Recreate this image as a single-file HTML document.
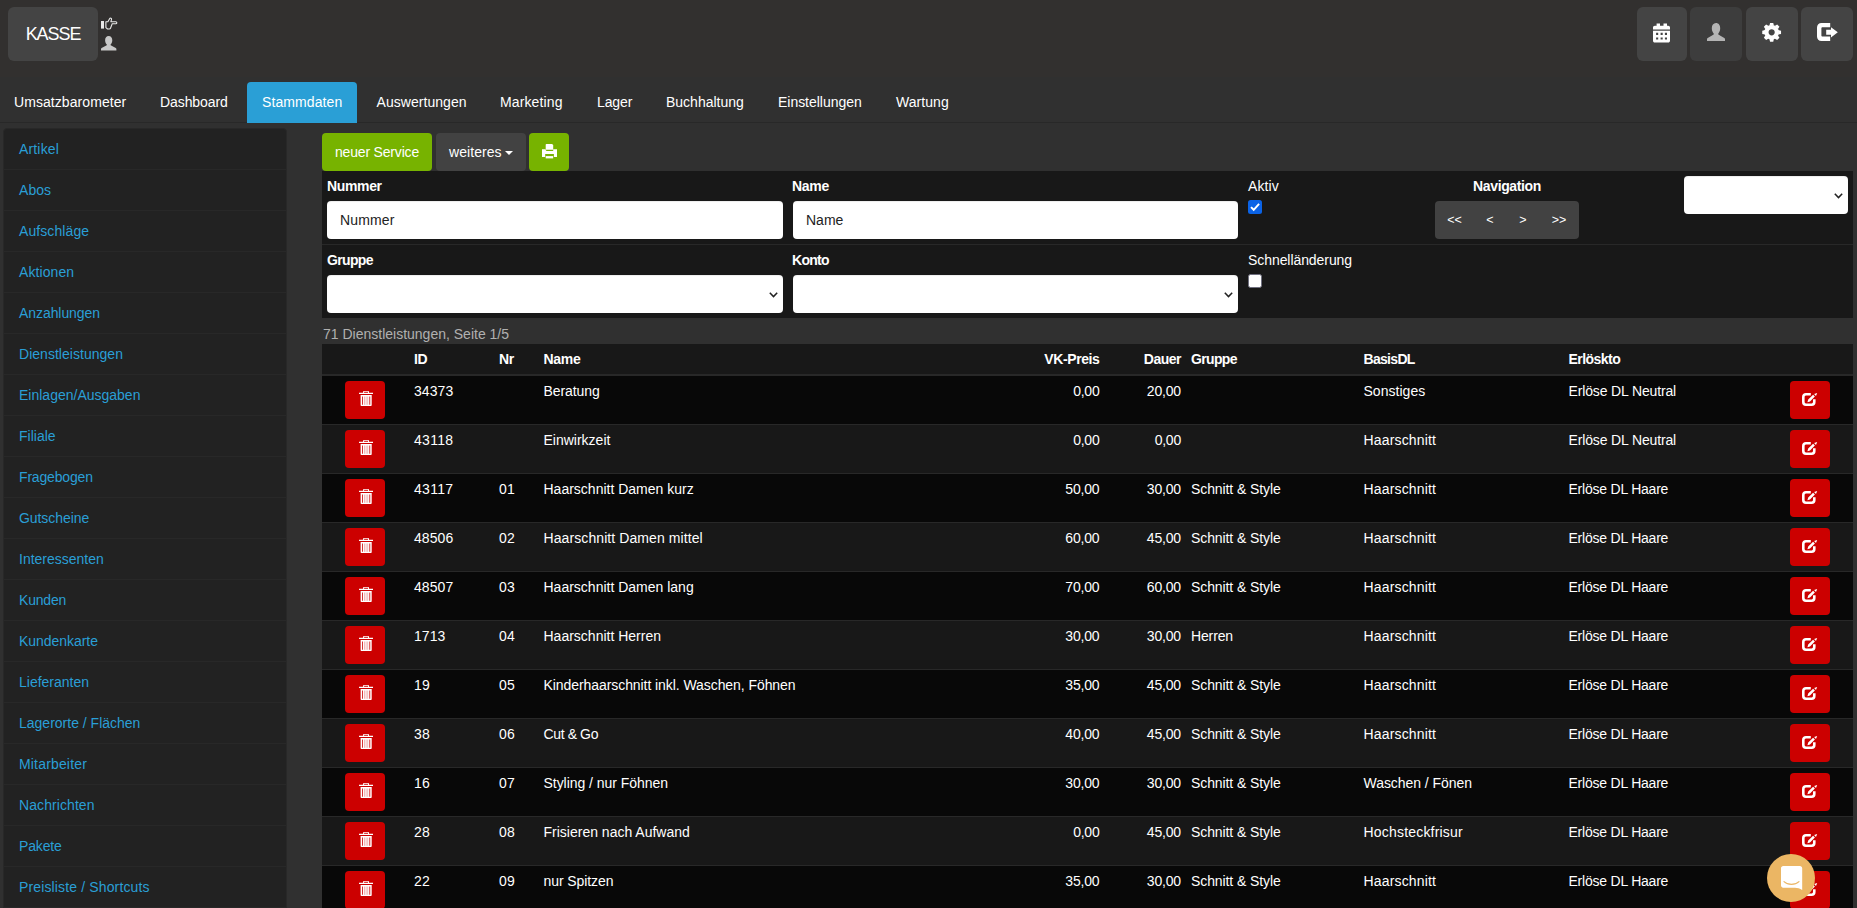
<!DOCTYPE html><html lang="de"><head><meta charset="utf-8"><title>Stammdaten - Dienstleistungen</title><style>
*{box-sizing:border-box;margin:0;padding:0}
html,body{width:1857px;height:908px;overflow:hidden;background:#303030}
body{font-family:"Liberation Sans",sans-serif;font-size:14px;line-height:20px;color:#fff;position:relative}
#app{position:absolute;left:0;top:0;width:1857px;height:908px;overflow:hidden;background:#303030}
.a{position:absolute;white-space:nowrap}
.ic{position:absolute;display:block;overflow:visible}
.hdr{left:0;top:0;width:1857px;height:77px;background:#32302f}
.hb{top:7px;height:54px;background:#444;border-radius:6px}
.kasse{left:8px;width:90px;font-size:18px;line-height:54px;text-align:center;color:#fff}
.nav{left:0;top:77px;width:1857px;height:46px;border-bottom:1px solid #282828;background:#303030}
.tab{top:92px;height:20px;color:#fff}
.tabact{left:247px;top:82px;width:110px;height:41px;background:#2a9fd6;border-radius:4px 4px 0 0}
.side{left:3px;top:128px;width:284px;height:790px;background:#222;border:1px solid #282828;border-radius:4px 4px 0 0}
.sl{left:0;width:282px;height:1px;background:#282828}
.si{left:15px;height:20px;color:#2a9fd6}
.btn{border-radius:4px;height:38px;top:133px;text-align:center;line-height:38px;color:#fff}
.g{background:#77b300}.d{background:#424242}.r{background:#cc0000}
.fp{left:322px;top:171px;width:1531px;height:147px;background:#181818}
.fl{height:20px;color:#fff}
.b{font-weight:700}
.inp{box-shadow:inset 0 1px 1px rgba(0,0,0,.075);background:#fff;border-radius:4px;height:38px;color:#222;line-height:38px;padding-left:13px}
.sep{left:322px;top:244px;width:1531px;height:1px;background:#282828}
.cb{width:14px;height:14px;border-radius:2.5px}
.th{left:322px;top:344px;width:1531px;height:32px;background:#181818;border-bottom:2px solid #282828}
.tr{left:322px;width:1531px;height:49px;border-bottom:1px solid #282828}
.e{background:#080808}.o{background:#181818}
.c{height:20px;color:#fff}
.rt{text-align:right}
.rb{width:40px;height:38px;border-radius:4px;background:#cc0000}
</style></head><body><div id="app">
<div class="a hdr"></div>
<div class="a hb kasse"><span style="letter-spacing:-1.07px">KASSE</span></div>
<svg class="ic" style="left:100.9px;top:16.7px;color:#e8e8e8" width="16.4" height="12.5" viewBox="0 0 16.4 12.5" preserveAspectRatio="none" fill="#e8e8e8"><rect x="0" y="4" width="3" height="7.6"/><path d="M4.900 4.800h2l2-3.600c1.200-.3 1.900.5 1.600 1.500L9.900 4.700h4.900c1.400 0 1.400 2.100 0 2.100H11.200l-1.700 4.400c-.2.500-.6.800-1.200.800H6.600L4.900 10.600z" fill="none" stroke="currentColor" stroke-width="1.100" stroke-linejoin="round"/></svg>
<svg class="ic" style="left:101px;top:35.7px;color:#c8c8c8" width="15.4" height="14.4" viewBox="0 0 18 18" preserveAspectRatio="none" fill="#c8c8c8"><path d="M9 0C11.600 0 13.200 2.200 13.200 5.200 13.200 7.600 12.300 9.400 11.300 10.400V11.600L17.300 15C17.800 15.300 18 15.800 18 16.300V18H0V16.300C0 15.800.2 15.300.7 15L6.700 11.600V10.400C5.700 9.400 4.800 7.600 4.800 5.200 4.800 2.200 6.400 0 9 0Z"/></svg>
<div class="a hb" style="left:1637px;width:50px;background:#444"></div>
<div class="a hb" style="left:1690px;width:52px;background:#3d3d3d"></div>
<div class="a hb" style="left:1746px;width:52px;background:#444"></div>
<div class="a hb" style="left:1801px;width:52px;background:#444"></div>
<svg class="ic" style="left:1653px;top:23.3px;color:#fff" width="17" height="19.5" viewBox="0 0 17 19.5" preserveAspectRatio="none" fill="#fff"><path d="M3.600 .5H7v2.300h3.500V.5h3.500v2.300h1.200c1 0 1.800.8 1.800 1.800v2H0v-2c0-1 .8-1.800 1.800-1.800h1.800z"/><path d="M0 7.700h17v10c0 1-.8 1.800-1.800 1.800H1.800c-1 0-1.800-.8-1.800-1.800z M3.100 9.800v2.100h2.100V9.800z M7.600 9.800v2.100h2.100V9.800z M11.900 9.800v2.100H14V9.800z M3.100 14.500v2.100h2.100v-2.100z M7.600 14.500v2.100h2.100v-2.100z M11.900 14.500v2.100H14v-2.100z" fill-rule="evenodd"/></svg>
<svg class="ic" style="left:1707px;top:23px;color:#b4b4b4" width="18" height="18" viewBox="0 0 18 18" preserveAspectRatio="none" fill="#b4b4b4"><path d="M9 0C11.600 0 13.200 2.200 13.200 5.200 13.200 7.600 12.300 9.400 11.300 10.400V11.600L17.300 15C17.800 15.300 18 15.800 18 16.300V18H0V16.300C0 15.800.2 15.300.7 15L6.700 11.600V10.400C5.700 9.400 4.800 7.600 4.800 5.200 4.800 2.200 6.400 0 9 0Z"/></svg>
<svg class="ic" style="left:1761.9px;top:22.7px;color:#fff" width="19.3" height="18.6" viewBox="-9.65 -9.3 19.3 18.6" preserveAspectRatio="none" fill="#fff"><g><circle r="5.2" fill="none" stroke="currentColor" stroke-width="4.200"/><path d="M-2.300 -6.500 L-1.600 -9.400 H1.600 L2.300 -6.500Z" transform="rotate(0)"/><path d="M-2.300 -6.500 L-1.600 -9.400 H1.600 L2.300 -6.500Z" transform="rotate(45)"/><path d="M-2.300 -6.500 L-1.600 -9.400 H1.600 L2.300 -6.500Z" transform="rotate(90)"/><path d="M-2.300 -6.500 L-1.600 -9.400 H1.600 L2.300 -6.500Z" transform="rotate(135)"/><path d="M-2.300 -6.500 L-1.600 -9.400 H1.600 L2.300 -6.500Z" transform="rotate(180)"/><path d="M-2.300 -6.500 L-1.600 -9.400 H1.600 L2.300 -6.500Z" transform="rotate(225)"/><path d="M-2.300 -6.500 L-1.600 -9.400 H1.600 L2.300 -6.500Z" transform="rotate(270)"/><path d="M-2.300 -6.500 L-1.600 -9.400 H1.600 L2.300 -6.500Z" transform="rotate(315)"/></g></svg>
<svg class="ic" style="left:1817.4px;top:23.4px;color:#fff" width="20.8" height="17.9" viewBox="0 0 20.800 18" preserveAspectRatio="none" fill="#fff"><path d="M13.200 0H4.500C1.800 0 0 1.800 0 4.500V13.500C0 16.200 1.800 18 4.500 18H13.200V13.700H5.500C4.800 13.700 4.400 13.300 4.400 12.600V5.400C4.400 4.700 4.800 4.300 5.500 4.300H13.200Z"/><path d="M9.200 6.900H14V4.200L20.800 9.300 14 14.600V11.700H9.200Z"/></svg>
<div class="a nav"></div><div class="a tabact"></div>
<div class="a tab" style="left:14px"><span style="letter-spacing:0.07px">Umsatzbarometer</span></div>
<div class="a tab" style="left:160px"><span style="letter-spacing:-0.09px">Dashboard</span></div>
<div class="a tab" style="left:262px"><span style="letter-spacing:0.09px">Stammdaten</span></div>
<div class="a tab" style="left:376.5px"><span style="letter-spacing:0.05px">Auswertungen</span></div>
<div class="a tab" style="left:500px"><span style="letter-spacing:0.12px">Marketing</span></div>
<div class="a tab" style="left:597px"><span style="letter-spacing:-0.12px">Lager</span></div>
<div class="a tab" style="left:666px">Buchhaltung</div>
<div class="a tab" style="left:778px"><span style="letter-spacing:-0.03px">Einstellungen</span></div>
<div class="a tab" style="left:896px"><span style="letter-spacing:0.06px">Wartung</span></div>
<div class="a side">
<div class="a si" style="top:10px"><span style="letter-spacing:0.16px">Artikel</span></div>
<div class="a sl" style="top:40px"></div>
<div class="a si" style="top:51px"><span style="letter-spacing:0.07px">Abos</span></div>
<div class="a sl" style="top:81px"></div>
<div class="a si" style="top:92px"><span style="letter-spacing:0.09px">Aufschläge</span></div>
<div class="a sl" style="top:122px"></div>
<div class="a si" style="top:133px"><span style="letter-spacing:0.08px">Aktionen</span></div>
<div class="a sl" style="top:163px"></div>
<div class="a si" style="top:174px"><span style="letter-spacing:-0.07px">Anzahlungen</span></div>
<div class="a sl" style="top:204px"></div>
<div class="a si" style="top:215px"><span style="letter-spacing:0.03px">Dienstleistungen</span></div>
<div class="a sl" style="top:245px"></div>
<div class="a si" style="top:256px">Einlagen/Ausgaben</div>
<div class="a sl" style="top:286px"></div>
<div class="a si" style="top:297px">Filiale</div>
<div class="a sl" style="top:327px"></div>
<div class="a si" style="top:338px"><span style="letter-spacing:-0.17px">Fragebogen</span></div>
<div class="a sl" style="top:368px"></div>
<div class="a si" style="top:379px"><span style="letter-spacing:-0.07px">Gutscheine</span></div>
<div class="a sl" style="top:409px"></div>
<div class="a si" style="top:420px">Interessenten</div>
<div class="a sl" style="top:450px"></div>
<div class="a si" style="top:461px"><span style="letter-spacing:-0.19px">Kunden</span></div>
<div class="a sl" style="top:491px"></div>
<div class="a si" style="top:502px"><span style="letter-spacing:-0.04px">Kundenkarte</span></div>
<div class="a sl" style="top:532px"></div>
<div class="a si" style="top:543px">Lieferanten</div>
<div class="a sl" style="top:573px"></div>
<div class="a si" style="top:584px">Lagerorte / Flächen</div>
<div class="a sl" style="top:614px"></div>
<div class="a si" style="top:625px"><span style="letter-spacing:0.17px">Mitarbeiter</span></div>
<div class="a sl" style="top:655px"></div>
<div class="a si" style="top:666px"><span style="letter-spacing:0.08px">Nachrichten</span></div>
<div class="a sl" style="top:696px"></div>
<div class="a si" style="top:707px"><span style="letter-spacing:-0.14px">Pakete</span></div>
<div class="a sl" style="top:737px"></div>
<div class="a si" style="top:748px"><span style="letter-spacing:0.14px">Preisliste / Shortcuts</span></div>
<div class="a sl" style="top:778px"></div>
</div>
<div class="a btn g" style="left:322px;width:110px"><span style="letter-spacing:-0.18px">neuer Service</span></div>
<div class="a btn d" style="left:436px;width:90px;text-align:left;padding-left:13px"><span style="letter-spacing:0.06px">weiteres</span></div>
<div class="a" style="left:505px;top:151px;width:0;height:0;border-left:4px solid transparent;border-right:4px solid transparent;border-top:4px solid #fff"></div>
<div class="a btn g" style="left:529px;width:40px"></div>
<svg class="ic" style="left:541.8px;top:143.9px;color:#fff" width="15" height="14.4" viewBox="0 0 15 14.400" preserveAspectRatio="none" fill="#fff"><path d="M4.300 0h5.800l1.100 1.100V5.800H3.700V.6z"/><path d="M0 5.200h3.700v1h7.500v-1H15v7.900h-3.100V9.900H3.200v3.200H0z M4.200 6.900h7v-.7h-7z" fill-rule="evenodd"/><rect x="3.700" y="12.100" width="7.500" height="2.300"/></svg>
<div class="a fp"></div><div class="a sep"></div>
<div class="a fl b" style="left:327px;top:176px"><span style="letter-spacing:-0.35px">Nummer</span></div>
<div class="a inp" style="left:327px;top:201px;width:456px"><span style="letter-spacing:0.13px">Nummer</span></div>
<div class="a fl b" style="left:792px;top:176px"><span style="letter-spacing:-0.27px">Name</span></div>
<div class="a inp" style="left:793px;top:201px;width:445px">Name</div>
<div class="a fl" style="left:1248px;top:176px"><span style="letter-spacing:0.13px">Aktiv</span></div>
<div class="a cb" style="left:1248px;top:200px;background:#0b63e6"></div>
<svg class="ic" style="left:1248px;top:200px" width="14" height="14" viewBox="0 0 13 13"><path d="M2.8 6.6 5.3 9.1 10.3 3.6" fill="none" stroke="#fff" stroke-width="1.8"/></svg>
<div class="a fl b" style="left:1435px;width:144px;text-align:center;top:176px"><span style="letter-spacing:-0.38px">Navigation</span></div>
<div class="a btn d" style="left:1435px;top:201px;width:144px"></div>
<div class="a fl" style="left:1434.5px;width:40px;text-align:center;top:210px;font-size:12.5px">&lt;&lt;</div>
<div class="a fl" style="left:1470px;width:40px;text-align:center;top:210px;font-size:12.5px">&lt;</div>
<div class="a fl" style="left:1503px;width:40px;text-align:center;top:210px;font-size:12.5px">&gt;</div>
<div class="a fl" style="left:1539px;width:40px;text-align:center;top:210px;font-size:12.5px">&gt;&gt;</div>
<div class="a inp" style="left:1684px;top:176px;width:164px"></div>
<div class="a fl b" style="left:327px;top:250px"><span style="letter-spacing:-0.66px">Gruppe</span></div>
<div class="a inp" style="left:327px;top:275px;width:456px"></div>
<div class="a fl b" style="left:792px;top:250px"><span style="letter-spacing:-0.7px">Konto</span></div>
<div class="a inp" style="left:793px;top:275px;width:445px"></div>
<div class="a fl" style="left:1248px;top:250px"><span style="letter-spacing:-0.07px">Schnelländerung</span></div>
<div class="a cb" style="left:1248px;top:274px;background:#fff;border:1px solid #6f6f7f"></div>
<svg class="ic" style="left:768.5px;top:292px" width="9" height="6" viewBox="0 0 9 6"><path d="M0.8 0.8 4.5 4.6 8.2 0.8" fill="none" stroke="#222" stroke-width="1.5"/></svg>
<svg class="ic" style="left:1223.5px;top:292px" width="9" height="6" viewBox="0 0 9 6"><path d="M0.8 0.8 4.5 4.6 8.2 0.8" fill="none" stroke="#222" stroke-width="1.5"/></svg>
<svg class="ic" style="left:1833.8px;top:192.5px" width="9" height="6" viewBox="0 0 9 6"><path d="M0.8 0.8 4.5 4.6 8.2 0.8" fill="none" stroke="#222" stroke-width="1.5"/></svg>
<div class="a" style="left:323px;top:324px;height:20px;color:#b0b0b0">71 Dienstleistungen, Seite 1/5</div>
<div class="a th"></div>
<div class="a c b" style="left:414px;top:349px"><span style="letter-spacing:-0.4px">ID</span></div>
<div class="a c b" style="left:499px;top:349px"><span style="letter-spacing:-0.27px">Nr</span></div>
<div class="a c b" style="left:543.5px;top:349px"><span style="letter-spacing:-0.27px">Name</span></div>
<div class="a c b rt" style="left:999.5px;width:100px;top:349px"><span style="letter-spacing:-0.4px">VK-Preis</span></div>
<div class="a c b rt" style="left:1081px;width:100px;top:349px"><span style="letter-spacing:-0.51px">Dauer</span></div>
<div class="a c b" style="left:1191px;top:349px"><span style="letter-spacing:-0.66px">Gruppe</span></div>
<div class="a c b" style="left:1363.5px;top:349px"><span style="letter-spacing:-0.69px">BasisDL</span></div>
<div class="a c b" style="left:1568.5px;top:349px"><span style="letter-spacing:-0.53px">Erlöskto</span></div>
<div class="a tr e" style="top:376px"></div>
<div class="a rb" style="left:345px;top:381px"></div>
<svg class="ic" style="left:359px;top:391px;color:#fff" width="14" height="15" viewBox="0 0 14 15" preserveAspectRatio="none" fill="#fff"><path d="M5.100 0h3.900c.6 0 1 .4 1 1v.7h4v1.400H0V1.700h4.100V1c0-.6.400-1 1-1z M5.100.8v.9h3.900V.8z" fill-rule="evenodd"/><path d="M1.600 4.100h11.100v9.900c0 .6-.4 1-1 1H2.600c-.6 0-1-.4-1-1z M3.200 5.500v8.300h.8V5.500z M10.400 5.500v8.300h.8V5.500z" fill-rule="evenodd"/><path d="M5.500 5.500v8.300M7.100 5.500v8.300M8.700 5.500v8.300" stroke="#cc0000" stroke-opacity=".4" stroke-width=".7"/></svg>
<div class="a rb" style="left:1790px;top:381px"></div>
<svg class="ic" style="left:1802.4px;top:393px;color:#fff" width="15.2" height="13" viewBox="0 0 15.200 13" preserveAspectRatio="none" fill="#fff"><path d="M8.800 1.300H4C2.300 1.300 1.300 2.300 1.300 4V9C1.300 10.700 2.300 11.700 4 11.700H9.600C11.300 11.700 12.300 10.700 12.300 9V6.300" fill="none" stroke="currentColor" stroke-width="2.600"/><path d="M5.400 9.300 6.200 6.600 11.100 1.800 12.900 3.600 8 8.400z M12.100 1 15.200 0 14 3z"/></svg>
<div class="a c" style="left:414px;top:381px"><span style="letter-spacing:0.08px">34373</span></div>
<div class="a c" style="left:543.5px;top:381px"><span style="letter-spacing:-0.09px">Beratung</span></div>
<div class="a c rt" style="left:999.5px;width:100px;top:381px"><span style="letter-spacing:-0.22px">0,00</span></div>
<div class="a c rt" style="left:1081px;width:100px;top:381px"><span style="letter-spacing:-0.16px">20,00</span></div>
<div class="a c" style="left:1363.5px;top:381px"><span style="letter-spacing:0.03px">Sonstiges</span></div>
<div class="a c" style="left:1568.5px;top:381px"><span style="letter-spacing:-0.14px">Erlöse DL Neutral</span></div>
<div class="a tr o" style="top:425px"></div>
<div class="a rb" style="left:345px;top:430px"></div>
<svg class="ic" style="left:359px;top:440px;color:#fff" width="14" height="15" viewBox="0 0 14 15" preserveAspectRatio="none" fill="#fff"><path d="M5.100 0h3.900c.6 0 1 .4 1 1v.7h4v1.400H0V1.700h4.100V1c0-.6.400-1 1-1z M5.100.8v.9h3.900V.8z" fill-rule="evenodd"/><path d="M1.600 4.100h11.100v9.900c0 .6-.4 1-1 1H2.600c-.6 0-1-.4-1-1z M3.200 5.500v8.300h.8V5.500z M10.400 5.500v8.300h.8V5.500z" fill-rule="evenodd"/><path d="M5.500 5.500v8.300M7.100 5.500v8.300M8.700 5.500v8.300" stroke="#cc0000" stroke-opacity=".4" stroke-width=".7"/></svg>
<div class="a rb" style="left:1790px;top:430px"></div>
<svg class="ic" style="left:1802.4px;top:442px;color:#fff" width="15.2" height="13" viewBox="0 0 15.200 13" preserveAspectRatio="none" fill="#fff"><path d="M8.800 1.300H4C2.300 1.300 1.300 2.300 1.300 4V9C1.300 10.700 2.300 11.700 4 11.700H9.600C11.300 11.700 12.300 10.700 12.300 9V6.300" fill="none" stroke="currentColor" stroke-width="2.600"/><path d="M5.400 9.300 6.200 6.600 11.100 1.800 12.900 3.600 8 8.400z M12.100 1 15.200 0 14 3z"/></svg>
<div class="a c" style="left:414px;top:430px"><span style="letter-spacing:0.29px">43118</span></div>
<div class="a c" style="left:543.5px;top:430px">Einwirkzeit</div>
<div class="a c rt" style="left:999.5px;width:100px;top:430px"><span style="letter-spacing:-0.22px">0,00</span></div>
<div class="a c rt" style="left:1081px;width:100px;top:430px"><span style="letter-spacing:-0.22px">0,00</span></div>
<div class="a c" style="left:1363.5px;top:430px"><span style="letter-spacing:0.16px">Haarschnitt</span></div>
<div class="a c" style="left:1568.5px;top:430px"><span style="letter-spacing:-0.14px">Erlöse DL Neutral</span></div>
<div class="a tr e" style="top:474px"></div>
<div class="a rb" style="left:345px;top:479px"></div>
<svg class="ic" style="left:359px;top:489px;color:#fff" width="14" height="15" viewBox="0 0 14 15" preserveAspectRatio="none" fill="#fff"><path d="M5.100 0h3.900c.6 0 1 .4 1 1v.7h4v1.400H0V1.700h4.100V1c0-.6.400-1 1-1z M5.100.8v.9h3.900V.8z" fill-rule="evenodd"/><path d="M1.600 4.100h11.100v9.900c0 .6-.4 1-1 1H2.600c-.6 0-1-.4-1-1z M3.200 5.500v8.300h.8V5.500z M10.400 5.500v8.300h.8V5.500z" fill-rule="evenodd"/><path d="M5.500 5.500v8.300M7.100 5.500v8.300M8.700 5.500v8.300" stroke="#cc0000" stroke-opacity=".4" stroke-width=".7"/></svg>
<div class="a rb" style="left:1790px;top:479px"></div>
<svg class="ic" style="left:1802.4px;top:491px;color:#fff" width="15.2" height="13" viewBox="0 0 15.200 13" preserveAspectRatio="none" fill="#fff"><path d="M8.800 1.300H4C2.300 1.300 1.300 2.300 1.300 4V9C1.300 10.700 2.300 11.700 4 11.700H9.600C11.300 11.700 12.300 10.700 12.300 9V6.300" fill="none" stroke="currentColor" stroke-width="2.600"/><path d="M5.400 9.300 6.200 6.600 11.100 1.800 12.900 3.600 8 8.400z M12.100 1 15.200 0 14 3z"/></svg>
<div class="a c" style="left:414px;top:479px"><span style="letter-spacing:0.29px">43117</span></div>
<div class="a c" style="left:499px;top:479px"><span style="letter-spacing:0.09px">01</span></div>
<div class="a c" style="left:543.5px;top:479px">Haarschnitt Damen kurz</div>
<div class="a c rt" style="left:999.5px;width:100px;top:479px"><span style="letter-spacing:-0.16px">50,00</span></div>
<div class="a c rt" style="left:1081px;width:100px;top:479px"><span style="letter-spacing:-0.16px">30,00</span></div>
<div class="a c" style="left:1191px;top:479px"><span style="letter-spacing:-0.09px">Schnitt &amp; Style</span></div>
<div class="a c" style="left:1363.5px;top:479px"><span style="letter-spacing:0.16px">Haarschnitt</span></div>
<div class="a c" style="left:1568.5px;top:479px"><span style="letter-spacing:-0.22px">Erlöse DL Haare</span></div>
<div class="a tr o" style="top:523px"></div>
<div class="a rb" style="left:345px;top:528px"></div>
<svg class="ic" style="left:359px;top:538px;color:#fff" width="14" height="15" viewBox="0 0 14 15" preserveAspectRatio="none" fill="#fff"><path d="M5.100 0h3.900c.6 0 1 .4 1 1v.7h4v1.400H0V1.700h4.100V1c0-.6.400-1 1-1z M5.100.8v.9h3.900V.8z" fill-rule="evenodd"/><path d="M1.600 4.100h11.100v9.900c0 .6-.4 1-1 1H2.600c-.6 0-1-.4-1-1z M3.200 5.500v8.300h.8V5.500z M10.400 5.500v8.300h.8V5.500z" fill-rule="evenodd"/><path d="M5.500 5.500v8.300M7.100 5.500v8.300M8.700 5.500v8.300" stroke="#cc0000" stroke-opacity=".4" stroke-width=".7"/></svg>
<div class="a rb" style="left:1790px;top:528px"></div>
<svg class="ic" style="left:1802.4px;top:540px;color:#fff" width="15.2" height="13" viewBox="0 0 15.200 13" preserveAspectRatio="none" fill="#fff"><path d="M8.800 1.300H4C2.300 1.300 1.300 2.300 1.300 4V9C1.300 10.700 2.300 11.700 4 11.700H9.600C11.300 11.700 12.300 10.700 12.300 9V6.300" fill="none" stroke="currentColor" stroke-width="2.600"/><path d="M5.400 9.300 6.200 6.600 11.100 1.800 12.900 3.600 8 8.400z M12.100 1 15.200 0 14 3z"/></svg>
<div class="a c" style="left:414px;top:528px"><span style="letter-spacing:0.08px">48506</span></div>
<div class="a c" style="left:499px;top:528px"><span style="letter-spacing:0.09px">02</span></div>
<div class="a c" style="left:543.5px;top:528px"><span style="letter-spacing:0.09px">Haarschnitt Damen mittel</span></div>
<div class="a c rt" style="left:999.5px;width:100px;top:528px"><span style="letter-spacing:-0.16px">60,00</span></div>
<div class="a c rt" style="left:1081px;width:100px;top:528px"><span style="letter-spacing:-0.16px">45,00</span></div>
<div class="a c" style="left:1191px;top:528px"><span style="letter-spacing:-0.09px">Schnitt &amp; Style</span></div>
<div class="a c" style="left:1363.5px;top:528px"><span style="letter-spacing:0.16px">Haarschnitt</span></div>
<div class="a c" style="left:1568.5px;top:528px"><span style="letter-spacing:-0.22px">Erlöse DL Haare</span></div>
<div class="a tr e" style="top:572px"></div>
<div class="a rb" style="left:345px;top:577px"></div>
<svg class="ic" style="left:359px;top:587px;color:#fff" width="14" height="15" viewBox="0 0 14 15" preserveAspectRatio="none" fill="#fff"><path d="M5.100 0h3.900c.6 0 1 .4 1 1v.7h4v1.400H0V1.700h4.100V1c0-.6.400-1 1-1z M5.100.8v.9h3.900V.8z" fill-rule="evenodd"/><path d="M1.600 4.100h11.100v9.900c0 .6-.4 1-1 1H2.600c-.6 0-1-.4-1-1z M3.200 5.500v8.300h.8V5.500z M10.400 5.500v8.300h.8V5.500z" fill-rule="evenodd"/><path d="M5.500 5.500v8.300M7.100 5.500v8.300M8.700 5.500v8.300" stroke="#cc0000" stroke-opacity=".4" stroke-width=".7"/></svg>
<div class="a rb" style="left:1790px;top:577px"></div>
<svg class="ic" style="left:1802.4px;top:589px;color:#fff" width="15.2" height="13" viewBox="0 0 15.200 13" preserveAspectRatio="none" fill="#fff"><path d="M8.800 1.300H4C2.300 1.300 1.300 2.300 1.300 4V9C1.300 10.700 2.300 11.700 4 11.700H9.600C11.300 11.700 12.300 10.700 12.300 9V6.300" fill="none" stroke="currentColor" stroke-width="2.600"/><path d="M5.400 9.300 6.200 6.600 11.100 1.800 12.900 3.600 8 8.400z M12.100 1 15.200 0 14 3z"/></svg>
<div class="a c" style="left:414px;top:577px"><span style="letter-spacing:0.08px">48507</span></div>
<div class="a c" style="left:499px;top:577px"><span style="letter-spacing:0.09px">03</span></div>
<div class="a c" style="left:543.5px;top:577px">Haarschnitt Damen lang</div>
<div class="a c rt" style="left:999.5px;width:100px;top:577px"><span style="letter-spacing:-0.16px">70,00</span></div>
<div class="a c rt" style="left:1081px;width:100px;top:577px"><span style="letter-spacing:-0.16px">60,00</span></div>
<div class="a c" style="left:1191px;top:577px"><span style="letter-spacing:-0.09px">Schnitt &amp; Style</span></div>
<div class="a c" style="left:1363.5px;top:577px"><span style="letter-spacing:0.16px">Haarschnitt</span></div>
<div class="a c" style="left:1568.5px;top:577px"><span style="letter-spacing:-0.22px">Erlöse DL Haare</span></div>
<div class="a tr o" style="top:621px"></div>
<div class="a rb" style="left:345px;top:626px"></div>
<svg class="ic" style="left:359px;top:636px;color:#fff" width="14" height="15" viewBox="0 0 14 15" preserveAspectRatio="none" fill="#fff"><path d="M5.100 0h3.900c.6 0 1 .4 1 1v.7h4v1.400H0V1.700h4.100V1c0-.6.400-1 1-1z M5.100.8v.9h3.900V.8z" fill-rule="evenodd"/><path d="M1.600 4.100h11.100v9.900c0 .6-.4 1-1 1H2.600c-.6 0-1-.4-1-1z M3.200 5.500v8.300h.8V5.500z M10.400 5.500v8.300h.8V5.500z" fill-rule="evenodd"/><path d="M5.500 5.500v8.300M7.100 5.500v8.300M8.700 5.500v8.300" stroke="#cc0000" stroke-opacity=".4" stroke-width=".7"/></svg>
<div class="a rb" style="left:1790px;top:626px"></div>
<svg class="ic" style="left:1802.4px;top:638px;color:#fff" width="15.2" height="13" viewBox="0 0 15.200 13" preserveAspectRatio="none" fill="#fff"><path d="M8.800 1.300H4C2.300 1.300 1.300 2.300 1.300 4V9C1.300 10.700 2.300 11.700 4 11.700H9.600C11.300 11.700 12.300 10.700 12.300 9V6.300" fill="none" stroke="currentColor" stroke-width="2.600"/><path d="M5.400 9.300 6.200 6.600 11.100 1.800 12.900 3.600 8 8.400z M12.100 1 15.200 0 14 3z"/></svg>
<div class="a c" style="left:414px;top:626px"><span style="letter-spacing:0.08px">1713</span></div>
<div class="a c" style="left:499px;top:626px"><span style="letter-spacing:0.09px">04</span></div>
<div class="a c" style="left:543.5px;top:626px">Haarschnitt Herren</div>
<div class="a c rt" style="left:999.5px;width:100px;top:626px"><span style="letter-spacing:-0.16px">30,00</span></div>
<div class="a c rt" style="left:1081px;width:100px;top:626px"><span style="letter-spacing:-0.16px">30,00</span></div>
<div class="a c" style="left:1191px;top:626px"><span style="letter-spacing:-0.14px">Herren</span></div>
<div class="a c" style="left:1363.5px;top:626px"><span style="letter-spacing:0.16px">Haarschnitt</span></div>
<div class="a c" style="left:1568.5px;top:626px"><span style="letter-spacing:-0.22px">Erlöse DL Haare</span></div>
<div class="a tr e" style="top:670px"></div>
<div class="a rb" style="left:345px;top:675px"></div>
<svg class="ic" style="left:359px;top:685px;color:#fff" width="14" height="15" viewBox="0 0 14 15" preserveAspectRatio="none" fill="#fff"><path d="M5.100 0h3.900c.6 0 1 .4 1 1v.7h4v1.400H0V1.700h4.100V1c0-.6.400-1 1-1z M5.100.8v.9h3.900V.8z" fill-rule="evenodd"/><path d="M1.600 4.100h11.100v9.900c0 .6-.4 1-1 1H2.600c-.6 0-1-.4-1-1z M3.200 5.500v8.300h.8V5.500z M10.400 5.500v8.300h.8V5.500z" fill-rule="evenodd"/><path d="M5.500 5.500v8.300M7.100 5.500v8.300M8.700 5.500v8.300" stroke="#cc0000" stroke-opacity=".4" stroke-width=".7"/></svg>
<div class="a rb" style="left:1790px;top:675px"></div>
<svg class="ic" style="left:1802.4px;top:687px;color:#fff" width="15.2" height="13" viewBox="0 0 15.200 13" preserveAspectRatio="none" fill="#fff"><path d="M8.800 1.300H4C2.300 1.300 1.300 2.300 1.300 4V9C1.300 10.700 2.300 11.700 4 11.700H9.600C11.300 11.700 12.300 10.700 12.300 9V6.300" fill="none" stroke="currentColor" stroke-width="2.600"/><path d="M5.400 9.300 6.200 6.600 11.100 1.800 12.900 3.600 8 8.400z M12.100 1 15.200 0 14 3z"/></svg>
<div class="a c" style="left:414px;top:675px"><span style="letter-spacing:0.09px">19</span></div>
<div class="a c" style="left:499px;top:675px"><span style="letter-spacing:0.09px">05</span></div>
<div class="a c" style="left:543.5px;top:675px"><span style="letter-spacing:-0.07px">Kinderhaarschnitt inkl. Waschen, Föhnen</span></div>
<div class="a c rt" style="left:999.5px;width:100px;top:675px"><span style="letter-spacing:-0.16px">35,00</span></div>
<div class="a c rt" style="left:1081px;width:100px;top:675px"><span style="letter-spacing:-0.16px">45,00</span></div>
<div class="a c" style="left:1191px;top:675px"><span style="letter-spacing:-0.09px">Schnitt &amp; Style</span></div>
<div class="a c" style="left:1363.5px;top:675px"><span style="letter-spacing:0.16px">Haarschnitt</span></div>
<div class="a c" style="left:1568.5px;top:675px"><span style="letter-spacing:-0.22px">Erlöse DL Haare</span></div>
<div class="a tr o" style="top:719px"></div>
<div class="a rb" style="left:345px;top:724px"></div>
<svg class="ic" style="left:359px;top:734px;color:#fff" width="14" height="15" viewBox="0 0 14 15" preserveAspectRatio="none" fill="#fff"><path d="M5.100 0h3.900c.6 0 1 .4 1 1v.7h4v1.400H0V1.700h4.100V1c0-.6.400-1 1-1z M5.100.8v.9h3.900V.8z" fill-rule="evenodd"/><path d="M1.600 4.100h11.100v9.900c0 .6-.4 1-1 1H2.600c-.6 0-1-.4-1-1z M3.200 5.500v8.300h.8V5.500z M10.400 5.500v8.300h.8V5.500z" fill-rule="evenodd"/><path d="M5.500 5.500v8.300M7.100 5.500v8.300M8.700 5.500v8.300" stroke="#cc0000" stroke-opacity=".4" stroke-width=".7"/></svg>
<div class="a rb" style="left:1790px;top:724px"></div>
<svg class="ic" style="left:1802.4px;top:736px;color:#fff" width="15.2" height="13" viewBox="0 0 15.200 13" preserveAspectRatio="none" fill="#fff"><path d="M8.800 1.300H4C2.300 1.300 1.300 2.300 1.300 4V9C1.300 10.700 2.300 11.700 4 11.700H9.600C11.300 11.700 12.300 10.700 12.300 9V6.300" fill="none" stroke="currentColor" stroke-width="2.600"/><path d="M5.400 9.300 6.200 6.600 11.100 1.800 12.900 3.600 8 8.400z M12.100 1 15.200 0 14 3z"/></svg>
<div class="a c" style="left:414px;top:724px"><span style="letter-spacing:0.09px">38</span></div>
<div class="a c" style="left:499px;top:724px"><span style="letter-spacing:0.09px">06</span></div>
<div class="a c" style="left:543.5px;top:724px"><span style="letter-spacing:-0.38px">Cut &amp; Go</span></div>
<div class="a c rt" style="left:999.5px;width:100px;top:724px"><span style="letter-spacing:-0.16px">40,00</span></div>
<div class="a c rt" style="left:1081px;width:100px;top:724px"><span style="letter-spacing:-0.16px">45,00</span></div>
<div class="a c" style="left:1191px;top:724px"><span style="letter-spacing:-0.09px">Schnitt &amp; Style</span></div>
<div class="a c" style="left:1363.5px;top:724px"><span style="letter-spacing:0.16px">Haarschnitt</span></div>
<div class="a c" style="left:1568.5px;top:724px"><span style="letter-spacing:-0.22px">Erlöse DL Haare</span></div>
<div class="a tr e" style="top:768px"></div>
<div class="a rb" style="left:345px;top:773px"></div>
<svg class="ic" style="left:359px;top:783px;color:#fff" width="14" height="15" viewBox="0 0 14 15" preserveAspectRatio="none" fill="#fff"><path d="M5.100 0h3.900c.6 0 1 .4 1 1v.7h4v1.400H0V1.700h4.100V1c0-.6.400-1 1-1z M5.100.8v.9h3.900V.8z" fill-rule="evenodd"/><path d="M1.600 4.100h11.100v9.900c0 .6-.4 1-1 1H2.600c-.6 0-1-.4-1-1z M3.200 5.500v8.300h.8V5.500z M10.400 5.500v8.300h.8V5.500z" fill-rule="evenodd"/><path d="M5.500 5.500v8.300M7.100 5.500v8.300M8.700 5.500v8.300" stroke="#cc0000" stroke-opacity=".4" stroke-width=".7"/></svg>
<div class="a rb" style="left:1790px;top:773px"></div>
<svg class="ic" style="left:1802.4px;top:785px;color:#fff" width="15.2" height="13" viewBox="0 0 15.200 13" preserveAspectRatio="none" fill="#fff"><path d="M8.800 1.300H4C2.300 1.300 1.300 2.300 1.300 4V9C1.300 10.700 2.300 11.700 4 11.700H9.600C11.300 11.700 12.300 10.700 12.300 9V6.300" fill="none" stroke="currentColor" stroke-width="2.600"/><path d="M5.400 9.300 6.200 6.600 11.100 1.800 12.900 3.600 8 8.400z M12.100 1 15.200 0 14 3z"/></svg>
<div class="a c" style="left:414px;top:773px"><span style="letter-spacing:0.09px">16</span></div>
<div class="a c" style="left:499px;top:773px"><span style="letter-spacing:0.09px">07</span></div>
<div class="a c" style="left:543.5px;top:773px"><span style="letter-spacing:-0.04px">Styling / nur Föhnen</span></div>
<div class="a c rt" style="left:999.5px;width:100px;top:773px"><span style="letter-spacing:-0.16px">30,00</span></div>
<div class="a c rt" style="left:1081px;width:100px;top:773px"><span style="letter-spacing:-0.16px">30,00</span></div>
<div class="a c" style="left:1191px;top:773px"><span style="letter-spacing:-0.09px">Schnitt &amp; Style</span></div>
<div class="a c" style="left:1363.5px;top:773px"><span style="letter-spacing:-0.05px">Waschen / Fönen</span></div>
<div class="a c" style="left:1568.5px;top:773px"><span style="letter-spacing:-0.22px">Erlöse DL Haare</span></div>
<div class="a tr o" style="top:817px"></div>
<div class="a rb" style="left:345px;top:822px"></div>
<svg class="ic" style="left:359px;top:832px;color:#fff" width="14" height="15" viewBox="0 0 14 15" preserveAspectRatio="none" fill="#fff"><path d="M5.100 0h3.900c.6 0 1 .4 1 1v.7h4v1.400H0V1.700h4.100V1c0-.6.400-1 1-1z M5.100.8v.9h3.900V.8z" fill-rule="evenodd"/><path d="M1.600 4.100h11.100v9.900c0 .6-.4 1-1 1H2.600c-.6 0-1-.4-1-1z M3.200 5.500v8.300h.8V5.500z M10.400 5.500v8.300h.8V5.500z" fill-rule="evenodd"/><path d="M5.500 5.500v8.300M7.100 5.500v8.300M8.700 5.500v8.300" stroke="#cc0000" stroke-opacity=".4" stroke-width=".7"/></svg>
<div class="a rb" style="left:1790px;top:822px"></div>
<svg class="ic" style="left:1802.4px;top:834px;color:#fff" width="15.2" height="13" viewBox="0 0 15.200 13" preserveAspectRatio="none" fill="#fff"><path d="M8.800 1.300H4C2.300 1.300 1.300 2.300 1.300 4V9C1.300 10.700 2.300 11.700 4 11.700H9.600C11.300 11.700 12.300 10.700 12.300 9V6.300" fill="none" stroke="currentColor" stroke-width="2.600"/><path d="M5.400 9.300 6.200 6.600 11.100 1.800 12.900 3.600 8 8.400z M12.100 1 15.200 0 14 3z"/></svg>
<div class="a c" style="left:414px;top:822px"><span style="letter-spacing:0.09px">28</span></div>
<div class="a c" style="left:499px;top:822px"><span style="letter-spacing:0.09px">08</span></div>
<div class="a c" style="left:543.5px;top:822px">Frisieren nach Aufwand</div>
<div class="a c rt" style="left:999.5px;width:100px;top:822px"><span style="letter-spacing:-0.22px">0,00</span></div>
<div class="a c rt" style="left:1081px;width:100px;top:822px"><span style="letter-spacing:-0.16px">45,00</span></div>
<div class="a c" style="left:1191px;top:822px"><span style="letter-spacing:-0.09px">Schnitt &amp; Style</span></div>
<div class="a c" style="left:1363.5px;top:822px"><span style="letter-spacing:0.19px">Hochsteckfrisur</span></div>
<div class="a c" style="left:1568.5px;top:822px"><span style="letter-spacing:-0.22px">Erlöse DL Haare</span></div>
<div class="a tr e" style="top:866px"></div>
<div class="a rb" style="left:345px;top:871px"></div>
<svg class="ic" style="left:359px;top:881px;color:#fff" width="14" height="15" viewBox="0 0 14 15" preserveAspectRatio="none" fill="#fff"><path d="M5.100 0h3.900c.6 0 1 .4 1 1v.7h4v1.400H0V1.700h4.100V1c0-.6.400-1 1-1z M5.100.8v.9h3.900V.8z" fill-rule="evenodd"/><path d="M1.600 4.100h11.100v9.900c0 .6-.4 1-1 1H2.600c-.6 0-1-.4-1-1z M3.200 5.500v8.300h.8V5.500z M10.400 5.500v8.300h.8V5.500z" fill-rule="evenodd"/><path d="M5.500 5.500v8.300M7.100 5.500v8.300M8.700 5.500v8.300" stroke="#cc0000" stroke-opacity=".4" stroke-width=".7"/></svg>
<div class="a rb" style="left:1790px;top:871px"></div>
<svg class="ic" style="left:1802.4px;top:883px;color:#fff" width="15.2" height="13" viewBox="0 0 15.200 13" preserveAspectRatio="none" fill="#fff"><path d="M8.800 1.300H4C2.300 1.300 1.300 2.300 1.300 4V9C1.300 10.700 2.300 11.700 4 11.700H9.600C11.300 11.700 12.300 10.700 12.300 9V6.300" fill="none" stroke="currentColor" stroke-width="2.600"/><path d="M5.400 9.300 6.200 6.600 11.100 1.800 12.900 3.600 8 8.400z M12.100 1 15.200 0 14 3z"/></svg>
<div class="a c" style="left:414px;top:871px"><span style="letter-spacing:0.09px">22</span></div>
<div class="a c" style="left:499px;top:871px"><span style="letter-spacing:0.09px">09</span></div>
<div class="a c" style="left:543.5px;top:871px"><span style="letter-spacing:-0.09px">nur Spitzen</span></div>
<div class="a c rt" style="left:999.5px;width:100px;top:871px"><span style="letter-spacing:-0.16px">35,00</span></div>
<div class="a c rt" style="left:1081px;width:100px;top:871px"><span style="letter-spacing:-0.16px">30,00</span></div>
<div class="a c" style="left:1191px;top:871px"><span style="letter-spacing:-0.09px">Schnitt &amp; Style</span></div>
<div class="a c" style="left:1363.5px;top:871px"><span style="letter-spacing:0.16px">Haarschnitt</span></div>
<div class="a c" style="left:1568.5px;top:871px"><span style="letter-spacing:-0.22px">Erlöse DL Haare</span></div>
<div class="a" style="left:1767px;top:854px;width:48px;height:48px;border-radius:50%;background:#ebb664"></div>
<svg class="ic" style="left:1780.6px;top:865.8px;color:#fff" width="21.2" height="23.9" viewBox="0 0 21.200 23.900" preserveAspectRatio="none" fill="#fff"><path d="M2.200 0h16.800c1.200 0 2.200 1 2.200 2.200v21.700c-2.400-1.300-4.600-2.100-7.200-2.100H2.200c-1.200 0-2.200-1-2.200-2.200V2.200C0 1 1 0 2.200 0z"/><path d="M3 15.600c4 3.800 11 3.800 15 0" fill="none" stroke="#ebb664" stroke-width="1.200" stroke-linecap="round"/></svg>
</div></body></html>
